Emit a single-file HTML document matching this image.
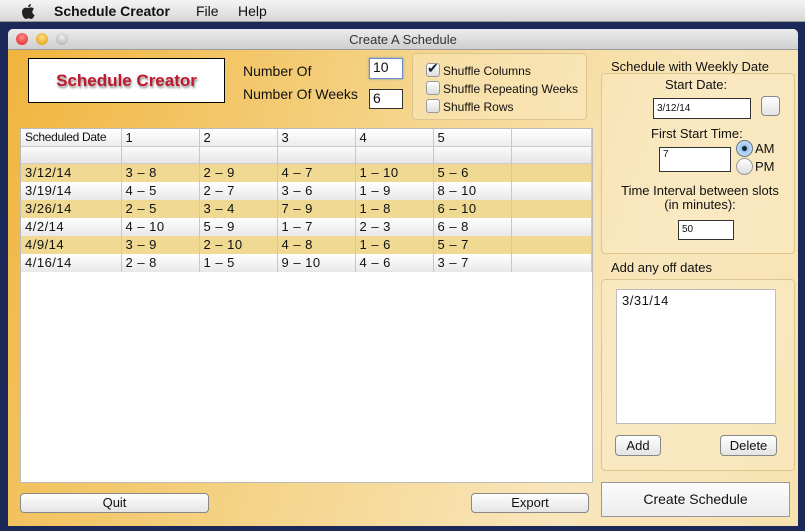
<!DOCTYPE html><html><head><style>
*{box-sizing:border-box;margin:0;padding:0}
body{width:805px;height:531px;overflow:hidden;background:#1b2858;font-family:"Liberation Sans",sans-serif;position:relative;font-size:13px;color:#111}
.a{position:absolute}
#menu{left:0;top:0;width:805px;height:22px;background:linear-gradient(#f4f4f4,#d8d8d8);border-bottom:1px solid #999;font-size:14px}
#win{left:8px;top:29px;width:790px;height:497px;background:linear-gradient(110deg,#f0b43c 0%,#f5d58c 45%,#f8e6bc 75%,#f7e2b0 100%);border-radius:5px 5px 0 0;overflow:hidden}
#tb{left:0;top:0;width:790px;height:21px;background:linear-gradient(#ececec,#cfcfcf);border-bottom:1px solid #9a9a9a;text-align:center;font-size:13px;line-height:21px;color:#333}
.dot{width:12px;height:12px;border-radius:50%;top:4px}
.in{background:#fff;border:1px solid #333;font-size:14px;padding-left:3px}
.cb{width:14px;height:14px;border:1px solid #999;border-radius:3px;background:linear-gradient(#fff,#ddd)}
.lbl{font-size:13px}
table{border-collapse:collapse;font-size:13px}
td{border-right:1px solid #c8c8c8;height:18px;line-height:17px;padding:0 0 0 4px;letter-spacing:.5px}
tr.h td{height:17px}
.btn{background:linear-gradient(#fff,#e4e4e4);border:1px solid #888;border-radius:4px;text-align:center;font-size:13px}
.grp{border:1px solid #dcc58e;border-radius:4px;background:rgba(250,236,200,.45)}
</style></head><body>
<div id="menu" class="a">
<svg class="a" style="left:20px;top:3px" width="16" height="17" viewBox="0 0 16 17"><path d="M11 1c0 2-1.5 3.3-3 3.2C8 2.5 9.5 1.1 11 1zM8 5c1 0 2-.8 3.2-.6 1.2.1 2.2.7 2.8 1.6-2.5 1.6-2 5 .6 6-.6 1.7-1.8 4-3.3 4-1 0-1.3-.6-2.6-.6s-1.8.6-2.8.6C4.3 16 2 12.6 2 9.3 2 6.5 3.8 4.6 5.7 4.6 6.8 4.6 7.3 5 8 5z" fill="#222"/></svg>
<b class="a" style="left:54px;top:3px">Schedule Creator</b>
<span class="a" style="left:196px;top:3px">File</span>
<span class="a" style="left:238px;top:3px">Help</span>
</div>
<div id="win" class="a">
<div id="tb" class="a">Create A Schedule</div>
<div class="a dot" style="left:8px;background:radial-gradient(circle at 50% 35%,#f88,#d22)"></div>
<div class="a dot" style="left:28px;background:radial-gradient(circle at 50% 35%,#fd8,#d90)"></div>
<div class="a dot" style="left:48px;background:radial-gradient(circle at 50% 35%,#eee,#aaa)"></div>

<div class="a" style="left:20px;top:29px;width:197px;height:45px;background:#fff;border:1px solid #000;text-align:center;line-height:43px;font-weight:bold;font-size:17px;color:#c0182c;text-shadow:1px 2px 2px #888">Schedule Creator</div>
<span class="a lbl" style="left:235px;top:34px;font-size:14px">Number Of</span>
<span class="a lbl" style="left:235px;top:57px;font-size:14px">Number Of Weeks</span>
<div class="a in" style="left:361px;top:29px;width:34px;height:21px;border-color:#6a8ec8;box-shadow:0 0 2px #6a8ec8">10</div>
<div class="a in" style="left:361px;top:60px;width:34px;height:20px">6</div>

<div class="a grp" style="left:404px;top:24px;width:175px;height:67px"></div>
<div class="a cb" style="left:418px;top:34px"></div><span class="a" style="left:419px;top:31px;font-size:14px;color:#123">&#10004;</span>
<span class="a lbl" style="left:435px;top:35px;font-size:12px">Shuffle Columns</span>
<div class="a cb" style="left:418px;top:52px"></div><span class="a lbl" style="left:435px;top:53px;font-size:12px">Shuffle Repeating Weeks</span>
<div class="a cb" style="left:418px;top:70px"></div><span class="a lbl" style="left:435px;top:71px;font-size:12px">Shuffle Rows</span>

<div class="a" style="left:12px;top:99px;width:573px;height:355px;background:#fff;border:1px solid #bbb">
<table style="width:571px">
<tr class="h" style="background:linear-gradient(#fff,#ececec);border-bottom:1px solid #ccc"><td style="width:100px;font-size:12px;letter-spacing:-.3px">Scheduled Date</td><td style="width:78px">1</td><td style="width:78px">2</td><td style="width:78px">3</td><td style="width:78px">4</td><td style="width:78px">5</td><td></td></tr>
<tr class="h" style="background:linear-gradient(#fafafa,#e6e6e6);border-bottom:1px solid #ccc"><td></td><td></td><td></td><td></td><td></td><td></td><td></td></tr>
<tr style="background:#efd993"><td>3/12/14</td><td>3 – 8</td><td>2 – 9</td><td>4 – 7</td><td>1 – 10</td><td>5 – 6</td><td></td></tr>
<tr style="background:linear-gradient(#fff,#e8e8e8)"><td>3/19/14</td><td>4 – 5</td><td>2 – 7</td><td>3 – 6</td><td>1 – 9</td><td>8 – 10</td><td></td></tr>
<tr style="background:#efd993"><td>3/26/14</td><td>2 – 5</td><td>3 – 4</td><td>7 – 9</td><td>1 – 8</td><td>6 – 10</td><td></td></tr>
<tr style="background:linear-gradient(#fff,#e8e8e8)"><td>4/2/14</td><td>4 – 10</td><td>5 – 9</td><td>1 – 7</td><td>2 – 3</td><td>6 – 8</td><td></td></tr>
<tr style="background:#efd993"><td>4/9/14</td><td>3 – 9</td><td>2 – 10</td><td>4 – 8</td><td>1 – 6</td><td>5 – 7</td><td></td></tr>
<tr style="background:linear-gradient(#fff,#e8e8e8)"><td>4/16/14</td><td>2 – 8</td><td>1 – 5</td><td>9 – 10</td><td>4 – 6</td><td>3 – 7</td><td></td></tr>
</table></div>

<div class="a btn" style="left:12px;top:464px;width:189px;height:20px;line-height:18px">Quit</div>
<div class="a btn" style="left:463px;top:464px;width:118px;height:20px;line-height:18px">Export</div>

<span class="a" style="left:603px;top:30px;font-size:13px">Schedule with Weekly Date</span>
<div class="a grp" style="left:593px;top:44px;width:194px;height:181px"></div>
<span class="a" style="left:657px;top:48px">Start Date:</span>
<div class="a in" style="left:645px;top:69px;width:98px;height:21px;font-size:10px;line-height:19px">3/12/14</div>
<div class="a btn" style="left:753px;top:67px;width:19px;height:20px"></div>
<span class="a" style="left:643px;top:97px">First Start Time:</span>
<div class="a in" style="left:651px;top:118px;width:72px;height:25px;font-size:10px;line-height:14px">7</div>
<div class="a" style="left:728px;top:111px;width:17px;height:17px;border-radius:50%;border:1px solid #678;background:radial-gradient(circle,#123 0 2px,#9cc5ee 3px,#dfeefe)"></div>
<span class="a" style="left:747px;top:112px">AM</span>
<div class="a" style="left:728px;top:129px;width:17px;height:17px;border-radius:50%;border:1px solid #999;background:linear-gradient(#fff,#ddd)"></div>
<span class="a" style="left:747px;top:130px">PM</span>
<span class="a" style="left:601px;top:155px;width:182px;text-align:center;line-height:14px">Time Interval between slots<br>(in minutes):</span>
<div class="a in" style="left:670px;top:191px;width:56px;height:20px;font-size:10px;line-height:18px">50</div>

<span class="a" style="left:603px;top:231px">Add any off dates</span>
<div class="a grp" style="left:593px;top:250px;width:194px;height:192px"></div>
<div class="a" style="left:608px;top:260px;width:160px;height:135px;background:#fff;border:1px solid #bbb;padding:3px 5px;letter-spacing:.5px">3/31/14</div>
<div class="a btn" style="left:607px;top:406px;width:46px;height:21px;line-height:19px">Add</div>
<div class="a btn" style="left:712px;top:406px;width:57px;height:21px;line-height:19px">Delete</div>

<div class="a" style="left:593px;top:453px;width:189px;height:35px;background:linear-gradient(#fcfcfc,#ececec);border:1px solid #999;text-align:center;line-height:33px;font-size:14px">Create Schedule</div>
</div>
</body></html>
